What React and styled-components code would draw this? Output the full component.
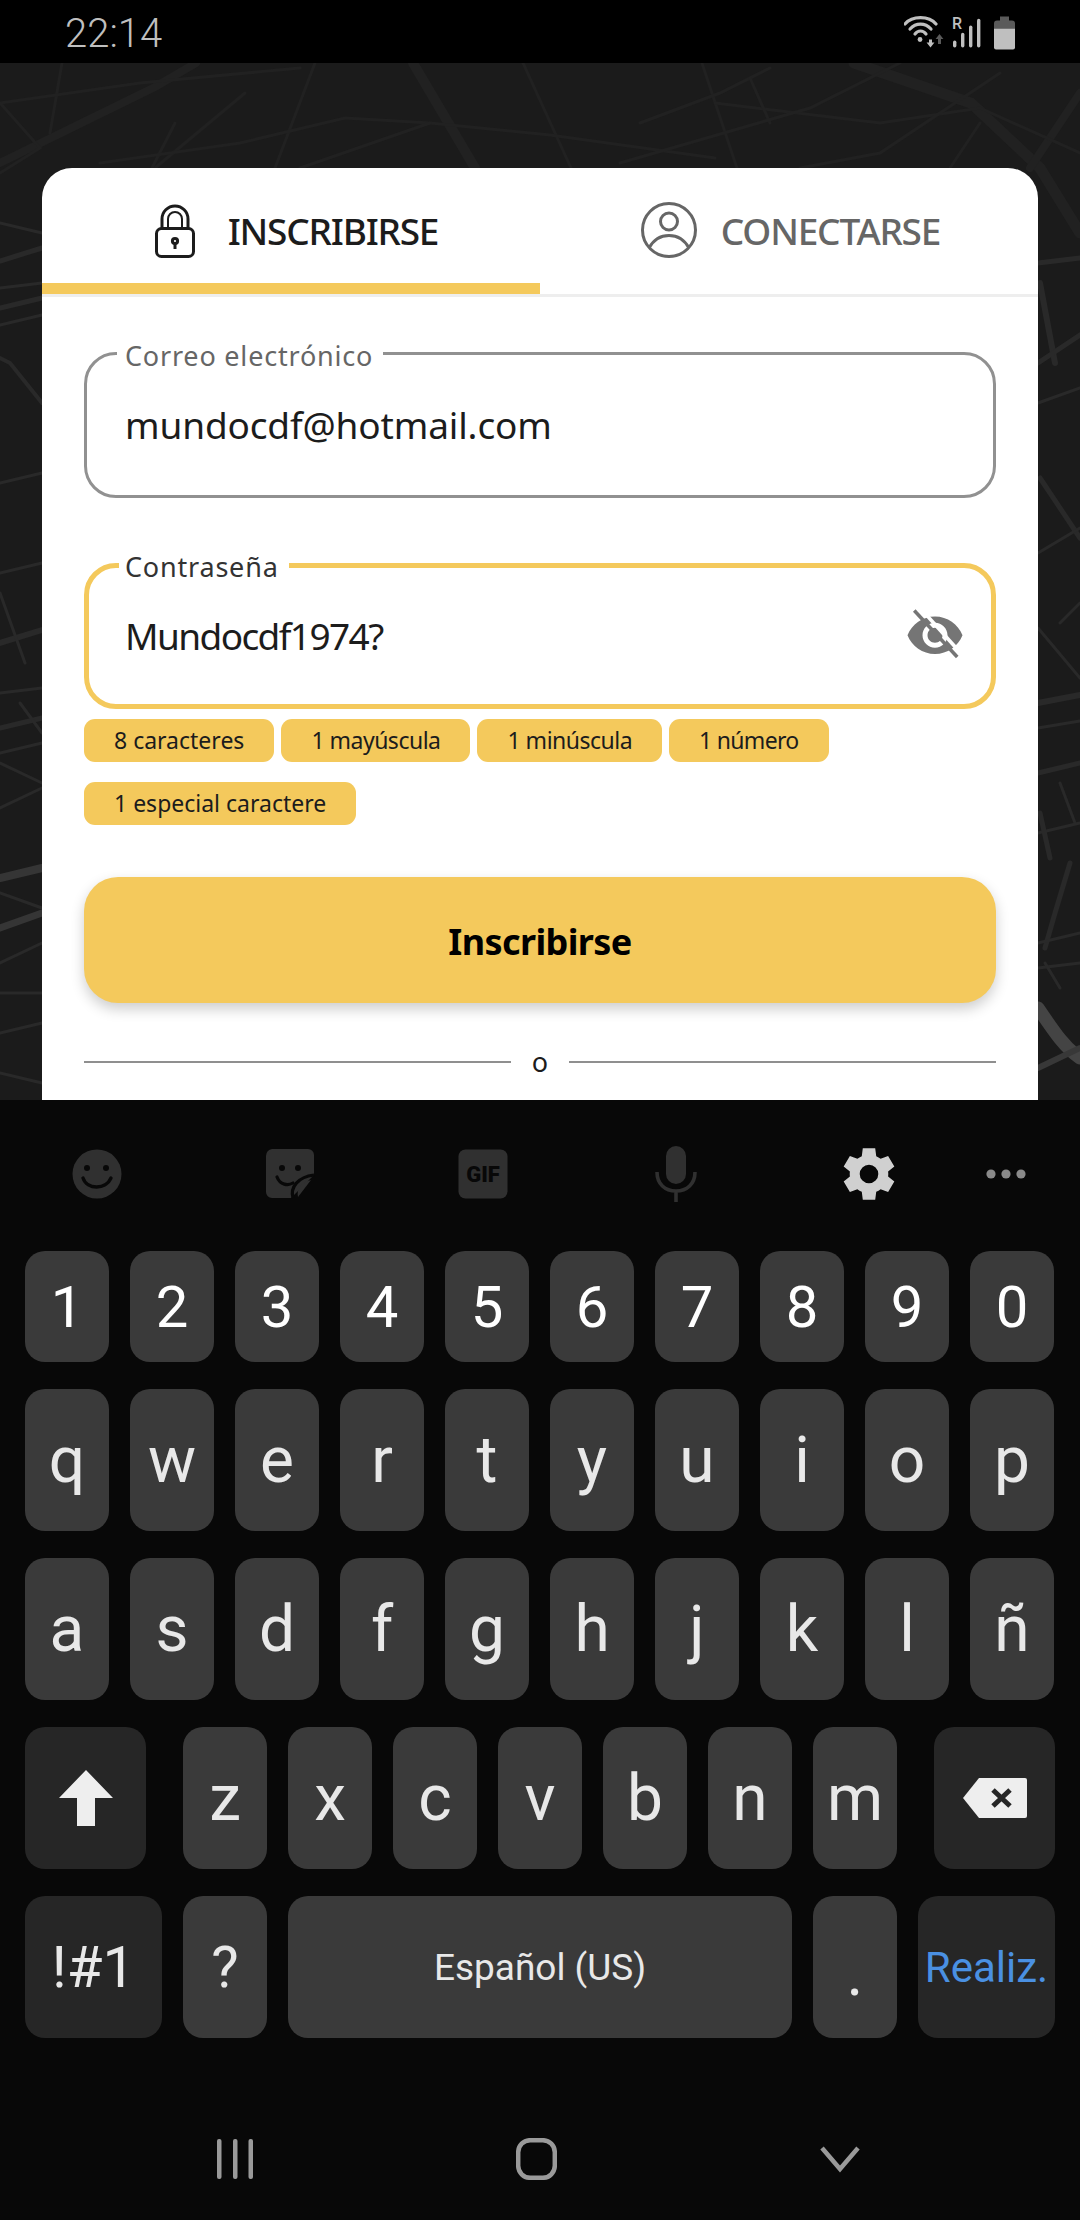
import React from "react";
import styled, { createGlobalStyle } from "styled-components";

const yellow = "#f4c95c";
const ui_font = `"Noto Sans", "Open Sans", sans-serif`;
const key_font = `Roboto, "Liberation Sans", sans-serif`;

const GlobalStyle = createGlobalStyle`
  html, body {
    margin: 0;
    padding: 0;
    background: #080808;
  }
  * {
    box-sizing: border-box;
  }
`;

const Screen = styled.div`
  width: 1080px;
  height: 2220px;
  display: flex;
  flex-direction: column;
  overflow: hidden;
  background: #080808;
`;

const StatusBar = styled.div`
  height: 63px;
  flex: none;
  background: #000;
  display: flex;
  align-items: center;
  justify-content: space-between;
  padding: 0 16px 0 65px;
  color: #bfbfbf;
  font-family: ${key_font};
  font-weight: 300;
  font-size: 40px;
`;

const Clock = styled.span`
  padding-top: 3px;
`;

const StatusIcons = styled.svg`
  width: 160px;
  height: 50px;
  display: block;
`;

const MapArea = styled.div`
  position: relative;
  height: 1037px;
  flex: none;
  overflow: hidden;
  background: #1b1b1b;
  padding: 105px 42px 0;
`;

const MapLines = styled.svg`
  position: absolute;
  left: 0;
  top: 0;
  width: 1080px;
  height: 1037px;
`;

const Card = styled.div`
  position: relative;
  background: #fff;
  border-radius: 30px 30px 0 0;
  height: 940px;
`;

const TabBar = styled.div`
  display: flex;
  height: 129px;
  border-bottom: 3px solid #eeeeee;
`;

const Tab = styled.div`
  width: 498px;
  height: 126px;
  display: flex;
  align-items: center;
  justify-content: center;
  gap: ${({ $active }) => ($active ? "33px" : "24px")};
  padding: ${({ $active }) => ($active ? "10px 0 0 11px" : "0 0 11px 3px")};
  border-bottom: ${({ $active }) => ($active ? `11px solid ${yellow}` : "none")};
  color: ${({ $active }) => ($active ? "#1c1c1c" : "#666666")};
  font-family: ${ui_font};
  font-weight: 500;
  font-size: 37px;
  letter-spacing: -1.2px;
`;

const TabLabel = styled.span`
  padding-top: ${({ $raised }) => ($raised ? "0" : "10px")};
`;

const TabIconBox = styled.span`
  display: flex;
  padding-top: ${({ $raised }) => ($raised ? "0" : "8px")};
`;

const Form = styled.div`
  padding: 55px 42px 0;
`;

const Field = styled.div`
  position: relative;
  height: 146px;
  border: ${({ $focused }) => ($focused ? `5px solid ${yellow}` : "3px solid #919191")};
  border-radius: 32px;
  display: flex;
  align-items: center;
  justify-content: space-between;
  padding: 0 ${({ $focused }) => ($focused ? "26px" : "32px")} 2px ${({ $focused }) => ($focused ? "36px" : "38px")};
  margin-bottom: ${({ $last }) => ($last ? "10px" : "65px")};
`;

const FieldLabel = styled.span`
  position: absolute;
  left: 30px;
  top: ${({ $focused }) => ($focused ? "-17px" : "-15px")};
  padding: 0 10px 0 ${({ $focused }) => ($focused ? "6px" : "8px")};
  line-height: 32px;
  background: #fff;
  color: ${({ $focused }) => ($focused ? "#333333" : "#666666")};
  font-family: ${ui_font};
  font-size: 27px;
  letter-spacing: 0.8px;
`;

const FieldValue = styled.span`
  color: #1c1c1c;
  font-family: ${ui_font};
  font-size: 37px;
  letter-spacing: ${({ $tracking }) => $tracking}px;
`;

const Chips = styled.div`
  display: flex;
  flex-wrap: wrap;
  gap: 20px 7px;
`;

const Chip = styled.span`
  height: 43px;
  padding: 0 30px 2px;
  display: flex;
  align-items: center;
  border-radius: 11px;
  background: ${yellow};
  color: #1c1c1c;
  font-family: ${ui_font};
  font-size: 23px;
  letter-spacing: ${({ $tracking }) => $tracking}px;
`;

const SubmitButton = styled.div`
  height: 126px;
  margin-top: 52px;
  padding-top: 2px;
  border-radius: 34px;
  background: ${yellow};
  box-shadow: 0 6px 14px rgba(0, 0, 0, 0.2);
  display: flex;
  align-items: center;
  justify-content: center;
  color: #000;
  font-family: ${ui_font};
  font-weight: 700;
  font-size: 36px;
  letter-spacing: -0.6px;
`;

const Divider = styled.div`
  margin-top: 42px;
  display: flex;
  align-items: center;
  gap: 21px;
  color: #1c1c1c;
  font-family: ${ui_font};
  font-size: 27px;
  line-height: 34px;
`;

const DividerLine = styled.div`
  flex: 1;
  height: 2px;
  background: #8f8f8f;
`;

const Keyboard = styled.div`
  flex: 1;
  background: #080808;
`;

const Toolbar = styled.div`
  height: 151px;
  display: flex;
  align-items: center;
  padding-bottom: 3px;
`;

const ToolSlot = styled.div`
  width: ${({ $narrow }) => ($narrow ? "82px" : "193px")};
  display: flex;
  justify-content: center;
`;

const KeyRow = styled.div`
  display: flex;
  gap: 21px;
  padding: 0 25px;
  margin-bottom: 27px;
`;

const Key = styled.div`
  width: ${({ $width }) => $width || 84}px;
  height: ${({ $short }) => ($short ? "111px" : "142px")};
  flex: none;
  margin-left: ${({ $shift }) => $shift || 0}px;
  padding-top: ${({ $drop }) => $drop || 0}px;
  display: flex;
  align-items: center;
  justify-content: center;
  border-radius: 20px;
  background: ${({ $dim }) => ($dim ? "#262626" : "#3a3a3a")};
  color: ${({ $short }) => ($short ? "#ffffff" : "#e8e8e8")};
  font-family: ${key_font};
  font-size: ${({ $size, $short }) => ($size ? $size : $short ? 58 : 64)}px;
`;

const BlueLabel = styled.span`
  color: #4a90e2;
`;

const NavBar = styled.div`
  margin-top: 100px;
  display: flex;
  align-items: center;
  gap: 263px;
  padding-left: 217px;
`;

const NavIcon = styled.svg`
  display: block;
  width: ${({ $w }) => $w}px;
  height: 42px;
`;

function StatusGlyphs() {
  return (
    <StatusIcons viewBox="0 0 160 50">
      <g fill="none" stroke="#bfbfbf" strokeWidth="3.2" strokeLinecap="round">
        <path d="M1 17 C8 8.5 25 8.5 32 17" />
        <path d="M6 22 C12 15.5 21 15.5 27 22" />
        <path d="M11 27 C14 23 19 23 22 27" />
      </g>
      <circle cx="16" cy="32.5" r="2.4" fill="#bfbfbf" />
      <path d="M25 32.5 h3 v3 h2.4 l-3.9 5 -3.9 -5 h2.4z" fill="#bfbfbf" />
      <path d="M35.5 27 l3.9 5 h-2.4 v5 h-3 v-5 h-2.4z" fill="#5a5a5a" />
      <text x="48" y="21.8" fill="#bfbfbf" fontFamily="Roboto, sans-serif" fontWeight="500" fontSize="16">R</text>
      <rect x="49" y="33.5" width="3.4" height="7" rx="1.7" fill="#bfbfbf" />
      <rect x="57" y="25.8" width="3.4" height="14.7" rx="1.7" fill="#bfbfbf" />
      <rect x="65" y="18.5" width="3.4" height="22" rx="1.7" fill="#bfbfbf" />
      <rect x="73" y="11.8" width="3.4" height="28.7" rx="1.7" fill="#bfbfbf" />
      <path d="M96 9.5 h9 v4 h3 a3 3 0 0 1 3 3 V22 H90 V16.5 a3 3 0 0 1 3 -3 h3z" fill="#5a5a5a" />
      <path d="M90 21.8 h21 V40.5 a2 2 0 0 1 -2 2 h-17 a2 2 0 0 1 -2 -2z" fill="#bfbfbf" />
    </StatusIcons>
  );
}

function MapDrawing() {
  return (
    <MapLines viewBox="0 0 1080 1037" fill="none" strokeLinecap="round">
      <g stroke="#212121" strokeWidth="8">
        <path d="M196 0 L155 24 L0 100" />
        <path d="M413 0 L475 105" strokeWidth="10" />
        <path d="M854 0 L971 40 L1040 105 L1080 170" strokeWidth="11" />
        <path d="M1080 30 L1030 105" />
      </g>
      <g stroke="#212121" strokeWidth="3">
        <path d="M523 0 L571 105" />
        <path d="M702 0 L737 105" />
        <path d="M62 0 L50 70" />
        <path d="M315 0 L275 105" />
        <path d="M245 30 L155 105" />
        <path d="M175 60 L152 105" />
        <path d="M0 40 L140 20 L300 5" />
        <path d="M100 100 L240 80 L345 55 L430 60 L550 72 L715 95" />
        <path d="M430 60 L300 105" />
        <path d="M715 40 L880 60 L980 45 L1080 90" />
        <path d="M640 60 L720 30 L770 5" />
        <path d="M770 60 L750 15" />
        <path d="M1000 10 L880 90 L800 105" />
        <path d="M980 60 L950 105" />
        <path d="M620 100 L810 45 L900 0" />
        <path d="M0 40 L40 85 L0 110" />
      </g>
      <g stroke="#292929" strokeWidth="3">
        <path d="M0 160 L42 170" />
        <path d="M0 198 L42 185" strokeWidth="5" />
        <path d="M0 225 L42 220" />
        <path d="M0 245 L42 235" strokeWidth="5" />
        <path d="M0 262 L42 252" />
        <path d="M0 295 L10 300 L42 340" strokeWidth="4" />
        <path d="M0 420 L42 410" />
        <path d="M0 510 L42 500" />
        <path d="M0 580 L42 567" strokeWidth="6" />
        <path d="M0 530 L25 600" />
        <path d="M0 630 L42 625" />
        <path d="M0 665 L42 655" strokeWidth="5" />
        <path d="M20 640 L42 670" />
        <path d="M0 690 L42 680" />
        <path d="M0 700 L42 720" />
        <path d="M0 745 L42 725" />
        <path d="M0 815 L42 805" strokeWidth="8" stroke="#353535" />
        <path d="M0 865 L42 850" strokeWidth="7" stroke="#353535" />
        <path d="M0 830 L42 845" />
        <path d="M0 900 L42 880" />
        <path d="M0 930 L42 930" />
        <path d="M0 970 L42 960" />
        <path d="M0 1010 L42 1020" />
      </g>
      <g stroke="#292929" strokeWidth="3">
        <path d="M1038 200 L1080 195" strokeWidth="5" />
        <path d="M1040 220 L1055 300" strokeWidth="6" />
        <path d="M1038 300 L1080 272" strokeWidth="5" />
        <path d="M1038 340 L1080 325" />
        <path d="M1040 415 L1080 475" strokeWidth="5" />
        <path d="M1038 490 L1080 465" />
        <path d="M1060 560 L1080 540" />
        <path d="M1038 565 L1080 615" />
        <path d="M1038 640 L1080 632" strokeWidth="6" />
        <path d="M1038 665 L1080 658" />
        <path d="M1038 710 L1080 700" strokeWidth="5" />
        <path d="M1060 720 L1075 760" />
        <path d="M1038 770 L1080 760" />
        <path d="M1040 750 L1050 795" strokeWidth="5" />
        <path d="M1070 800 L1055 850 L1045 885" strokeWidth="5" />
        <path d="M1038 880 L1080 870" />
        <path d="M1038 905 L1080 900" />
        <path d="M1045 900 L1060 925" />
      </g>
      <path d="M1038 945 C1055 970 1065 985 1080 995" stroke="#444444" strokeWidth="13" />
      <path d="M1038 1005 L1080 985" stroke="#383838" strokeWidth="6" />
    </MapLines>
  );
}

function LockIcon() {
  return (
    <svg width="40" height="54" viewBox="0 0 40 54" fill="none" stroke="#1c1c1c" strokeWidth="3">
      <rect x="1.5" y="24.5" width="37" height="28" rx="5" />
      <path d="M7 24 V15 a13 13 0 0 1 26 0 V24" />
      <path d="M13 24 V15 a7 7 0 0 1 14 0 V24" strokeWidth="2" />
      <circle cx="20" cy="37" r="2.6" />
      <path d="M20 40 V45" />
    </svg>
  );
}

function PersonIcon() {
  return (
    <svg width="56" height="56" viewBox="0 0 56 56" fill="none" stroke="#666666" strokeWidth="3">
      <circle cx="28" cy="28" r="26.5" />
      <circle cx="28" cy="19.5" r="8.5" />
      <path d="M8 46 C13 37 20 33.5 28 33.5 C36 33.5 43 37 48 46" />
    </svg>
  );
}

function HiddenEye() {
  return (
    <svg width="60" height="54" viewBox="0 0 24 21.6">
      <path fill="#757575" d="M12 3.4C7 3.4 2.73 6.51 1 10.9c1.73 4.39 6 7.5 11 7.5s9.27-3.11 11-7.5c-1.73-4.39-6-7.5-11-7.5zM12 15.9c-2.76 0-5-2.24-5-5s2.24-5 5-5 5 2.24 5 5-2.24 5-5 5zm0-8c-1.66 0-3 1.34-3 3s1.34 3 3 3 3-1.34 3-3-1.34-3-3-3z" />
      <path d="M5 0.6 L21 18.4" stroke="#fff" strokeWidth="1.4" transform="translate(0.9 -0.8)" />
      <path d="M3.7 1 L20.9 19.6" stroke="#757575" strokeWidth="1.4" />
    </svg>
  );
}

function ToolIcons({ name }) {
  if (name === "smile") {
    return (
      <svg width="50" height="50" viewBox="0 0 50 50">
        <circle cx="25" cy="25" r="24.5" fill="#303030" />
        <circle cx="15" cy="19" r="3" fill="#080808" />
        <circle cx="34" cy="19" r="3" fill="#080808" />
        <path d="M11 29 C15 41 34 41 39 29" stroke="#080808" strokeWidth="3.4" fill="none" strokeLinecap="round" />
      </svg>
    );
  }
  if (name === "sticker") {
    return (
      <svg width="50" height="50" viewBox="0 0 50 50">
        <path d="M7 0 H43 a6 6 0 0 1 6 6 V26 L26 49 H7 a6 6 0 0 1 -6 -6 V7 a7 7 0 0 1 6 -7z" fill="#303030" />
        <circle cx="17" cy="19" r="3" fill="#080808" />
        <circle cx="33" cy="19" r="3" fill="#080808" />
        <path d="M12 28 C15 36 23 37 28 34" stroke="#080808" strokeWidth="3.2" fill="none" strokeLinecap="round" />
        <path d="M28 49 C25 38 33 28 49 26" stroke="#080808" strokeWidth="3.2" fill="none" />
        <path d="M33 48 C31 40 37 33 46 31 L33 48z" fill="#303030" />
      </svg>
    );
  }
  if (name === "gif") {
    return (
      <svg width="50" height="50" viewBox="0 0 50 50">
        <rect x="0.5" y="0.5" width="49" height="49" rx="7" fill="#303030" />
        <text x="25" y="33" textAnchor="middle" fill="#080808" fontFamily="Roboto, sans-serif" fontWeight="900" fontSize="22">GIF</text>
      </svg>
    );
  }
  if (name === "mic") {
    return (
      <svg width="42" height="56" viewBox="0 0 42 56">
        <rect x="11" y="0" width="20" height="38" rx="10" fill="#303030" />
        <path d="M2 26 C2 38 10 45 21 45 C32 45 40 38 40 26 M21 45 V56" stroke="#303030" strokeWidth="3.6" fill="none" />
      </svg>
    );
  }
  if (name === "gear") {
    return (
      <svg width="62" height="62" viewBox="0 0 24 24">
        <path fill="#d0d0d0" fillRule="evenodd" d="M19.4 13a7.6 7.6 0 0 0 0-2l2.4-1.9-2.4-4.1-2.9 1.1a7.6 7.6 0 0 0-1.7-1L14.4 2H9.6l-.4 3.1a7.6 7.6 0 0 0-1.7 1L4.6 5 2.2 9.1 4.6 11a7.6 7.6 0 0 0 0 2l-2.4 1.9L4.6 19l2.9-1.1a7.6 7.6 0 0 0 1.7 1l.4 3.1h4.8l.4-3.1a7.6 7.6 0 0 0 1.7-1l2.9 1.1 2.4-4.1zM12 15.6a3.6 3.6 0 1 1 0-7.2 3.6 3.6 0 0 1 0 7.2z" />
      </svg>
    );
  }
  return (
    <svg width="42" height="12" viewBox="0 0 42 12" fill="#8a8a8a">
      <circle cx="6" cy="6" r="4.6" />
      <circle cx="21" cy="6" r="4.6" />
      <circle cx="36" cy="6" r="4.6" />
    </svg>
  );
}

function ShiftIcon() {
  return (
    <svg width="54" height="56" viewBox="0 0 54 56">
      <path d="M27 0 L54 28 H36 V56 H18 V28 H0z" fill="#eeeeee" />
    </svg>
  );
}

function BackspaceIcon() {
  return (
    <svg width="64" height="40" viewBox="0 0 64 40">
      <path d="M16 0 H62 a2 2 0 0 1 2 2 V38 a2 2 0 0 1 -2 2 H16 L0 20z" fill="#eeeeee" />
      <path d="M30 12 L47 28 M47 12 L30 28" stroke="#262626" strokeWidth="5" />
    </svg>
  );
}

const rows = [
  ["q", "w", "e", "r", "t", "y", "u", "i", "o", "p"],
  ["a", "s", "d", "f", "g", "h", "j", "k", "l", "ñ"],
];

const chips = [
  { label: "8 caracteres", tracking: 0 },
  { label: "1 mayúscula", tracking: -0.5 },
  { label: "1 minúscula", tracking: -0.5 },
  { label: "1 número", tracking: -0.7 },
  { label: "1 especial caractere", tracking: 0 },
];

export default function App() {
  return (
    <Screen>
      <GlobalStyle />
      <StatusBar>
        <Clock>22:14</Clock>
        <StatusGlyphs />
      </StatusBar>

      <MapArea>
        <MapDrawing />
        <Card>
          <TabBar>
            <Tab $active>
              <TabIconBox $raised>
                <LockIcon />
              </TabIconBox>
              <TabLabel $raised>INSCRIBIRSE</TabLabel>
            </Tab>
            <Tab>
              <TabIconBox>
                <PersonIcon />
              </TabIconBox>
              <TabLabel>CONECTARSE</TabLabel>
            </Tab>
          </TabBar>
          <Form>
            <Field>
              <FieldLabel>Correo electrónico</FieldLabel>
              <FieldValue $tracking={-0.15}>mundocdf@hotmail.com</FieldValue>
            </Field>
            <Field $focused $last>
              <FieldLabel $focused>Contraseña</FieldLabel>
              <FieldValue $tracking={-1.6}>Mundocdf1974?</FieldValue>
              <HiddenEye />
            </Field>
            <Chips>
              {chips.map((chip) => (
                <Chip key={chip.label} $tracking={chip.tracking}>{chip.label}</Chip>
              ))}
            </Chips>
            <SubmitButton>Inscribirse</SubmitButton>
            <Divider>
              <DividerLine />
              o
              <DividerLine />
            </Divider>
          </Form>
        </Card>
      </MapArea>

      <Keyboard>
        <Toolbar>
          <ToolSlot><ToolIcons name="smile" /></ToolSlot>
          <ToolSlot><ToolIcons name="sticker" /></ToolSlot>
          <ToolSlot><ToolIcons name="gif" /></ToolSlot>
          <ToolSlot><ToolIcons name="mic" /></ToolSlot>
          <ToolSlot><ToolIcons name="gear" /></ToolSlot>
          <ToolSlot $narrow><ToolIcons name="dots" /></ToolSlot>
        </Toolbar>
        <KeyRow>
          {["1", "2", "3", "4", "5", "6", "7", "8", "9", "0"].map((k) => (
            <Key key={k} $short>{k}</Key>
          ))}
        </KeyRow>
        {rows.map((row) => (
          <KeyRow key={row[0]}>
            {row.map((k) => (
              <Key key={k}>{k}</Key>
            ))}
          </KeyRow>
        ))}
        <KeyRow>
          <Key $dim $width={121}><ShiftIcon /></Key>
          <Key $shift={16}>z</Key>
          {["x", "c", "v", "b", "n", "m"].map((k) => (
            <Key key={k}>{k}</Key>
          ))}
          <Key $dim $width={121} $shift={16}><BackspaceIcon /></Key>
        </KeyRow>
        <KeyRow>
          <Key $dim $width={137} $size={58}>!#1</Key>
          <Key $size={58}>?</Key>
          <Key $width={504} $size={37}>Español (US)</Key>
          <Key $drop={12}>.</Key>
          <Key $dim $width={137} $size={42}><BlueLabel>Realiz.</BlueLabel></Key>
        </KeyRow>
        <NavBar>
          <NavIcon $w={36} viewBox="0 0 36 42" fill="#9a9a9a">
            <rect x="0" y="1" width="4.5" height="40" rx="2" />
            <rect x="16" y="1" width="4.5" height="40" rx="2" />
            <rect x="31.5" y="1" width="4.5" height="40" rx="2" />
          </NavIcon>
          <NavIcon $w={41} viewBox="0 0 41 42" fill="none" stroke="#9a9a9a" strokeWidth="4.5">
            <rect x="2.2" y="2.2" width="36.6" height="37.6" rx="12" />
          </NavIcon>
          <NavIcon $w={40} viewBox="0 0 40 42" fill="none" stroke="#9a9a9a" strokeWidth="4.5">
            <path d="M2 10 L20 31 L38 10" />
          </NavIcon>
        </NavBar>
      </Keyboard>
    </Screen>
  );
}
